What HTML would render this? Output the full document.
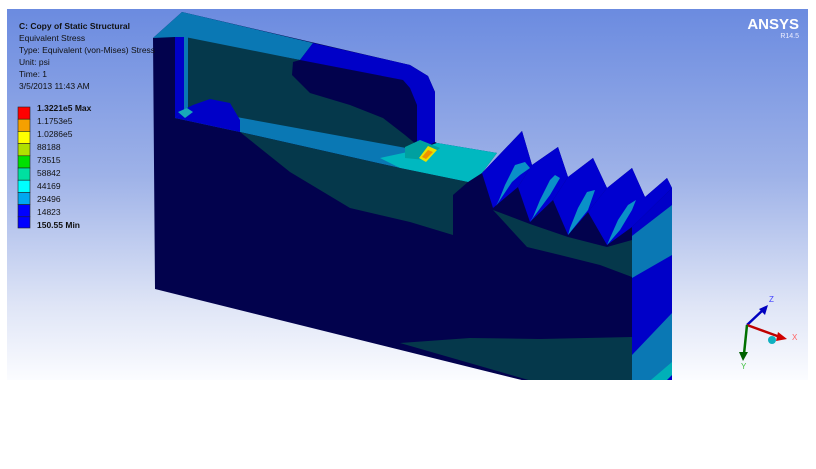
<!DOCTYPE html>
<html><head><meta charset="utf-8"><style>
html,body{margin:0;padding:0;background:#fff;width:816px;height:469px;overflow:hidden}
#vp{position:absolute;left:7px;top:9px;width:801px;height:371px;background:linear-gradient(#6b8be0,#9eb2e8 45%,#dfe5f6 80%,#fbfcff);overflow:hidden}
svg{position:absolute;left:0;top:0}
.t{position:absolute;left:19px;font:8.5px "Liberation Sans",sans-serif;color:#111;line-height:12px}
.lg{position:absolute;left:37px;font:8.5px "Liberation Sans",sans-serif;color:#111}
</style></head><body>
<div id="vp"></div>
<svg width="816" height="469" viewBox="0 0 816 469">
<defs><clipPath id="c"><rect x="7" y="9" width="801" height="371"/></clipPath></defs>
<g clip-path="url(#c)">
<polygon fill="#02024d" points="153,38 182,12 410,65 428,76 435,92 435,142 437,143 497,153 482,173 522,131 532,165 558,147 568,177 593,158 607,188 632,168 645,197 667,178 672,188 672,372 650,392 570,392 155,289"/>
<polygon fill="#0a78b4" points="153,38 182,12 313,43 300,60 175,37"/>
<polygon fill="#0000c8" points="313,43 410,65 428,76 435,92 435,142 417,152 417,105 410,88 403,80 300,60"/>
<polygon fill="#05384b" points="185,37 300,60 293,62 292,75 310,93 350,105 383,118 405,135 417,145 417,152 187,108"/>
<polygon fill="#0000c8" points="175,37 185,37 185,112 175,118"/>
<polygon fill="#0a78b4" points="184,37 188,37 188,108 184,110"/>
<polygon fill="#0a78b4" points="175,118 187,108 417,150 437,143 497,153 468,182 400,168 240,132"/>
<polygon fill="#0000c8" points="175,118 187,108 193,105 210,99 230,103 240,120 240,132"/>
<polygon fill="#18a8b8" points="178,112 187,108 193,112 185,118"/>
<polygon fill="#00b8c0" points="380,158 417,150 437,143 497,153 482,173 468,182 400,168"/>
<polygon fill="#00a0a0" points="405,147 420,140 440,148 425,160 405,158"/>
<polygon fill="#e8e000" points="419,158 428,146 437,150 426,162"/>
<polygon fill="#f09000" points="422,157 428,150 433,152 426,159"/>
<polygon fill="#05384b" points="240,132 400,168 468,182 453,195 453,235 410,222 350,208 290,172"/>
<!-- teeth blue faces -->
<polygon fill="#0000d0" points="482,173 522,131 532,165 518,187 493,208"/>
<polygon fill="#0000d0" points="518,187 532,165 558,147 568,177 553,200 530,222"/>
<polygon fill="#0000d0" points="553,200 568,177 593,158 607,188 588,212 568,235"/>
<polygon fill="#0000d0" points="588,212 607,188 632,168 645,197 667,178 672,188 632,227 607,245"/>
<polygon fill="#0a90c8" points="499,200 505,185 515,165 525,162 530,168 520,175 512,182 496,206"/>
<polygon fill="#0a90c8" points="533,217 540,200 550,180 555,175 560,178 550,195 530,222"/>
<polygon fill="#0a90c8" points="570,228 578,208 587,192 595,190 588,210 568,235"/>
<polygon fill="#0a90c8" points="610,238 618,220 628,205 636,200 632,210 620,230 607,245"/>
<polygon fill="#05384b" points="493,210 530,224 568,237 607,247 632,240 632,277 600,265 560,255 527,247"/>
<polygon fill="#05384b" points="400,343 470,338 540,339 632,337 632,392 570,392"/>
<polygon fill="#0000c8" points="632,227 672,188 672,380 650,392 632,392"/>
<polygon fill="#0a78b4" points="632,236 672,205 672,255 632,278"/>
<polygon fill="#0a78b4" points="632,355 672,313 672,375 650,392 632,392"/>
<polygon fill="#00b0b8" points="645,385 672,362 672,375 655,392"/>
<line x1="747" y1="325" x2="764" y2="309" stroke="#0000c0" stroke-width="2.5"/>
<polygon fill="#0000c0" points="768,305 759,309 765,315"/>
<line x1="747" y1="325" x2="780" y2="337" stroke="#c00000" stroke-width="2.5"/>
<polygon fill="#d00000" points="787,339 778,332 776,341"/>
<line x1="747" y1="325" x2="744" y2="354" stroke="#007000" stroke-width="2.5"/>
<polygon fill="#006000" points="743,361 739,352 748,352"/>
<circle cx="772" cy="340" r="4" fill="#10b0c0"/>
<text x="769" y="302" font-family="Liberation Sans" font-size="8" fill="#4040ff">Z</text>
<text x="792" y="340" font-family="Liberation Sans" font-size="8" fill="#ff6060">X</text>
<text x="741" y="369" font-family="Liberation Sans" font-size="8" fill="#40c040">Y</text>
</g>
<text x="799" y="29" text-anchor="end" font-family="Liberation Sans" font-size="15" font-weight="bold" fill="#fff">ANSYS</text>
<text x="799" y="38" text-anchor="end" font-family="Liberation Sans" font-size="7" fill="#eef">R14.5</text>
<g stroke="#222" stroke-width="0.6">
<rect x="18" y="107" width="12" height="12.2" fill="#ff0000"/>
<rect x="18" y="119.2" width="12" height="12.2" fill="#f5a000"/>
<rect x="18" y="131.4" width="12" height="12.2" fill="#ffff00"/>
<rect x="18" y="143.6" width="12" height="12.2" fill="#b0e000"/>
<rect x="18" y="155.8" width="12" height="12.2" fill="#00e000"/>
<rect x="18" y="168" width="12" height="12.2" fill="#00e0a0"/>
<rect x="18" y="180.2" width="12" height="12.2" fill="#00ffff"/>
<rect x="18" y="192.4" width="12" height="12.2" fill="#00a8f0"/>
<rect x="18" y="204.6" width="12" height="12.2" fill="#0000ff"/>
<rect x="18" y="216.8" width="12" height="11.2" fill="#0000ff"/>
</g>
</svg>
<div class="t" style="top:20px;font-weight:bold">C: Copy of Static Structural</div>
<div class="t" style="top:32px">Equivalent Stress</div>
<div class="t" style="top:44px">Type: Equivalent (von-Mises) Stress</div>
<div class="t" style="top:56px">Unit: psi</div>
<div class="t" style="top:68px">Time: 1</div>
<div class="t" style="top:80px">3/5/2013 11:43 AM</div>
<div class="lg" style="top:103px;font-weight:bold">1.3221e5 Max</div>
<div class="lg" style="top:116px">1.1753e5</div>
<div class="lg" style="top:129px">1.0286e5</div>
<div class="lg" style="top:142px">88188</div>
<div class="lg" style="top:155px">73515</div>
<div class="lg" style="top:168px">58842</div>
<div class="lg" style="top:181px">44169</div>
<div class="lg" style="top:194px">29496</div>
<div class="lg" style="top:207px">14823</div>
<div class="lg" style="top:220px;font-weight:bold">150.55 Min</div>
</body></html>
